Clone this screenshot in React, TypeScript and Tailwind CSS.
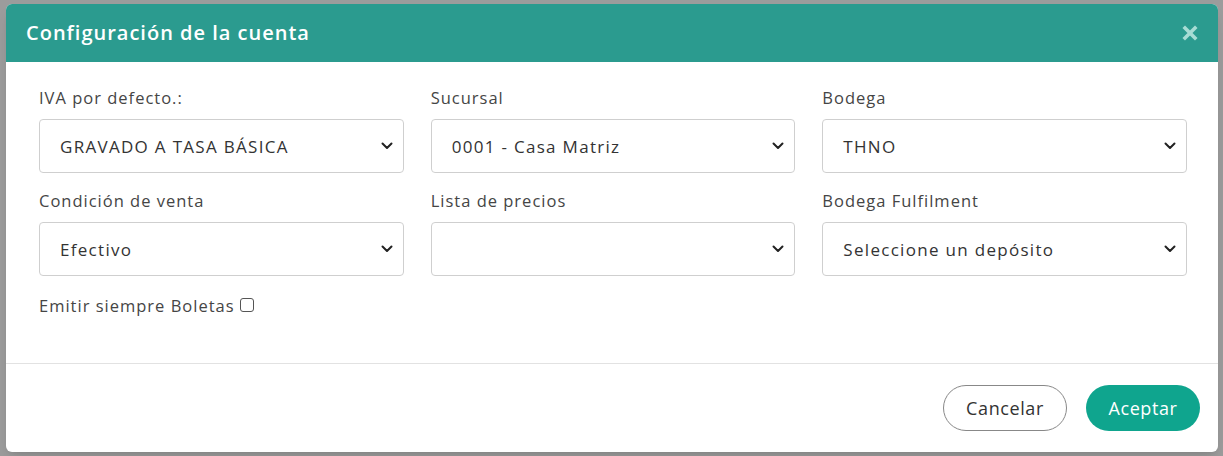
import React from 'react';

const font = { fontFamily: '"Open Sans", "Liberation Sans", sans-serif' };

interface FieldProps {
  label: string;
  value?: string;
}

function Chevron() {
  return (
    <svg width="12" height="8" viewBox="0 0 12 8" className="shrink-0">
      <path d="M1.5 1.5 L6 6 L10.5 1.5" fill="none" stroke="#222" strokeWidth="2" strokeLinecap="round" strokeLinejoin="round" />
    </svg>
  );
}

function SelectField({ label, value }: FieldProps) {
  return (
    <div className="flex flex-col">
      <label className="text-[16.5px] leading-[24px] text-[#454545] tracking-[1px] mb-[9px]">{label}</label>
      <div className="h-[54px] border border-[#cfcfcf] rounded-[4px] bg-white flex items-center justify-between pl-[20px] pr-[10px]">
        <span className="text-[17px] text-[#333] tracking-[1.3px] pt-[2px]">{value ?? ''}</span>
        <Chevron />
      </div>
    </div>
  );
}

export default function App() {
  return (
    <div className="w-[1223px] h-[456px] bg-[#9c9c9c] pt-[4px] pl-[6px] overflow-hidden" style={font}>
      <div className="w-[1212px] h-[448px] bg-white rounded-[6px] overflow-hidden flex flex-col shadow-lg">
        {/* header */}
        <div className="h-[58px] bg-[#2b9b8f] flex items-center justify-between pl-[20px] pr-[20px] shrink-0">
          <h2 className="text-white text-[20px] font-semibold tracking-[1px]">Configuración de la cuenta</h2>
          <button className="shrink-0">
            <svg width="16" height="16" viewBox="0 0 16 16">
              <path d="M3 3 L13 13 M13 3 L3 13" stroke="#a7dcd4" strokeWidth="3.6" strokeLinecap="square" />
            </svg>
          </button>
        </div>

        {/* body */}
        <div className="pl-[33px] pr-[31px] pt-[24px] flex-1">
          <div className="grid grid-cols-3 gap-x-[27px] gap-y-[16px]">
            <SelectField label="IVA por defecto.:" value="GRAVADO A TASA BÁSICA" />
            <SelectField label="Sucursal" value="0001 - Casa Matriz" />
            <SelectField label="Bodega" value="THNO" />
            <SelectField label="Condición de venta" value="Efectivo" />
            <SelectField label="Lista de precios" />
            <SelectField label="Bodega Fulfilment" value="Seleccione un depósito" />
          </div>
          <div className="mt-[18px] flex items-center gap-[5px] text-[16.5px] leading-[24px] text-[#454545] tracking-[1px]">
            <span>Emitir siempre Boletas</span>
            <span className="w-[14px] h-[14px] border border-[#555] rounded-[3px] bg-white -mt-[3px]" />
          </div>
        </div>

        {/* footer */}
        <div className="h-[89px] border-t border-[#e2e2e2] flex items-center justify-end gap-[19px] pr-[18px] shrink-0">
          <button className="h-[46px] w-[124px] rounded-full border border-[#888] text-[#333] text-[18px] tracking-[0.6px] bg-white">Cancelar</button>
          <button className="h-[46px] w-[114px] rounded-full bg-[#0fa58e] text-white text-[18px] tracking-[0.6px] font-medium">Aceptar</button>
        </div>
      </div>
    </div>
  );
}
